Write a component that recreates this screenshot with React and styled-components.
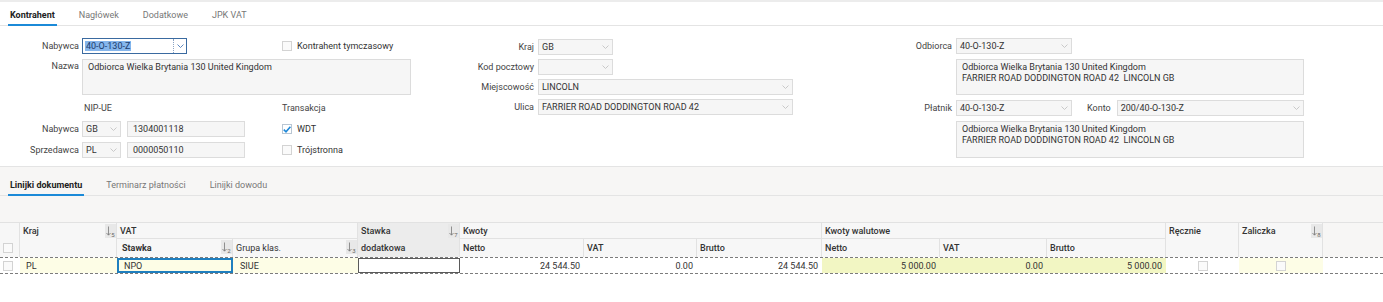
import styled, { createGlobalStyle } from "styled-components";

const GlobalStyle = createGlobalStyle`
  body {
    margin: 0;
    background: #fff;
    font-family: Roboto, "Liberation Sans", sans-serif;
    font-size: 9px;
    color: #333;
  }
  * { box-sizing: border-box; }
`;

const Page = styled.div`
  width: 1383px;
  border-top: 2px solid #ececec;
`;

const TabBar = styled.div`
  display: flex;
  align-items: flex-end;
  gap: 20px;
  height: ${(p) => p.$h}px;
  padding: 0 8px;
  border-bottom: 1px solid #e4e4e4;
`;

const Tab = styled.div`
  padding: 0 2px 3px;
  margin-bottom: -1px;
  line-height: 12px;
  font-size: 9px;
  color: ${(p) => (p.$active ? "#222" : "#777")};
  font-weight: ${(p) => (p.$active ? 700 : 400)};
  border-bottom: 2px solid ${(p) => (p.$active ? "#1b8ad8" : "transparent")};
`;

/* ---------- form ---------- */

const FormArea = styled.div`
  display: flex;
  align-items: flex-start;
  padding: 12px 0 8px;
`;

const Panel = styled.div`
  display: grid;
  grid-template-columns: ${(p) => p.$cols};
  grid-template-rows: ${(p) => p.$rows || "none"};
  grid-auto-rows: 16px;
  column-gap: ${(p) => p.$cgap || 4}px;
  row-gap: ${(p) => p.$rgap}px;
  width: ${(p) => p.$w}px;
  padding-top: ${(p) => p.$pt || 0}px;
`;

const Label = styled.div`
  grid-column: 1;
  text-align: right;
  color: #444;
  line-height: ${(p) => (p.$top ? "10px" : "16px")};
  align-self: ${(p) => (p.$top ? "start" : "stretch")};
  padding-top: ${(p) => (p.$top ? "2px" : "0")};
  white-space: nowrap;
`;

const Cell = styled.div`
  grid-column: ${(p) => p.$col || "auto"};
  display: flex;
  align-items: center;
  gap: ${(p) => p.$gap || 0}px;
  min-width: 0;
`;

const Caption = styled.div`
  color: #444;
  padding-left: ${(p) => p.$pl || 0}px;
  margin: ${(p) => p.$margin || "0"};
  line-height: 16px;
`;

const SelectBox = styled.div`
  flex: ${(p) => (p.$w ? "none" : "1")};
  width: ${(p) => (p.$w ? `${p.$w}px` : "auto")};
  height: 16px;
  display: flex;
  align-items: center;
  border: 1px solid ${(p) => (p.$focus ? "#3a6aa0" : "#dcdcdc")};
  background: ${(p) => (p.$focus ? "#fff" : "#f6f6f6")};
  color: #333;
`;

const SelectValue = styled.span`
  flex: 1;
  padding-left: ${(p) => (p.$focus ? 2 : 3)}px;
  white-space: nowrap;
  overflow: hidden;
`;

const Highlight = styled.span`
  background: #86b6ec;
  color: #1c3c6c;
  padding: 0 1px;
`;

const Arrow = styled.span`
  flex: none;
  width: ${(p) => (p.$focus ? 13 : 14)}px;
  height: 100%;
  display: flex;
  align-items: center;
  justify-content: center;
  border-left: ${(p) => (p.$focus ? "1px dotted #8aa3c4" : "none")};
`;

const TextInput = styled.div`
  flex: none;
  width: ${(p) => p.$w}px;
  height: 16px;
  line-height: 14px;
  padding-left: 5px;
  border: 1px solid #dcdcdc;
  background: #f6f6f6;
  color: #333;
`;

const TextArea = styled.div`
  grid-column: ${(p) => p.$col || "auto"};
  border: 1px solid #dcdcdc;
  background: #f6f6f6;
  padding: 2px 5px;
  line-height: 11px;
  color: #333;
`;

const Box = styled.span`
  flex: none;
  display: inline-flex;
  align-items: center;
  justify-content: center;
  width: 10px;
  height: 10px;
  border: 1px solid ${(p) => (p.$checked ? "#b9c6d3" : "#d3d3d3")};
  background: ${(p) => (p.$checked ? "#fff" : "#fafafa")};
`;

const CheckLabel = styled.span`
  color: #333;
  margin-left: 5px;
`;

const Chevron = ({ focus }) => (
  <svg width="7" height="4" viewBox="0 0 7 4">
    <polyline points="0.5,0.5 3.5,3.5 6.5,0.5" fill="none" stroke={focus ? "#4d7cb8" : "#c4c4c4"} strokeWidth="0.9" />
  </svg>
);

const Select = ({ w, value, focus }) => (
  <SelectBox $w={w} $focus={focus}>
    <SelectValue $focus={focus}>{focus ? <Highlight>{value}</Highlight> : value}</SelectValue>
    <Arrow $focus={focus}>
      <Chevron focus={focus} />
    </Arrow>
  </SelectBox>
);

const Check = ({ checked }) => (
  <Box $checked={checked}>
    {checked && (
      <svg width="8" height="7" viewBox="0 0 8 7">
        <polyline points="0.8,3.6 3,5.8 7.4,0.8" fill="none" stroke="#1e88d8" strokeWidth="1.6" />
      </svg>
    )}
  </Box>
);

/* ---------- lower part ---------- */

const Lower = styled.div`
  background: #f7f6f5;
  border-top: 1px solid #e4e4e4;
`;

const Spacer = styled.div`
  height: 26px;
`;

const COLS = "20px 97px 116px 125px 102px 124px 113px 125px 118px 107px 119px 73px 84px 1fr";

const HeadGrid = styled.div`
  display: grid;
  grid-template-columns: ${COLS};
  grid-template-rows: 16px 18px;
  border-top: 1px solid #e2e2e2;
`;

const HeadCell = styled.div`
  grid-column: ${(p) => p.$col};
  grid-row: ${(p) => p.$row};
  display: flex;
  justify-content: space-between;
  align-items: flex-start;
  padding-left: ${(p) => (p.$pl !== undefined ? p.$pl : 3)}px;
  background: ${(p) => p.$bg || "#f7f7f7"};
  border-right: ${(p) => (p.$none ? "none" : "1px solid #e2e2e2")};
  border-bottom: ${(p) => (p.$bottom ? "1px solid #e2e2e2" : "none")};
  line-height: ${(p) => p.$lh || 16}px;
  font-weight: ${(p) => p.$weight || 500};
  color: #333;
  white-space: nowrap;
`;

const CenterBox = styled.div`
  align-self: center;
  display: flex;
`;

const SortBox = styled.span`
  flex: none;
  display: flex;
  align-items: flex-start;
  justify-content: center;
  width: 11px;
  height: 14px;
  margin-top: 1px;
  padding-top: 2px;
  background: #e8e8e8;
  color: #666;
  font-size: 6px;
  font-weight: 400;
  line-height: 6px;
`;

const SortNum = styled.span`
  padding-top: 6px;
`;

const Sort = ({ n }) => (
  <SortBox>
    <svg width="5" height="10" viewBox="0 0 5 10">
      <path d="M2.5 0.5 V9 M0.5 7 L2.5 9.2 L4.5 7" fill="none" stroke="#777" strokeWidth="0.8" />
    </svg>
    <SortNum>{n}</SortNum>
  </SortBox>
);

const DataRow = styled.div`
  display: grid;
  grid-template-columns: ${COLS};
  height: 17px;
  border-top: 1px dashed #7c7c7c;
  border-bottom: 1px dashed #7c7c7c;
  background: #fff;
`;

const DataCell = styled.div`
  display: flex;
  align-items: center;
  justify-content: ${(p) => p.$justify || "flex-start"};
  padding: ${(p) => (p.$right ? "0 4px 0 0" : `0 0 0 ${p.$pl || 0}px`)};
  background: ${(p) => p.$bg || "#fff"};
  border: ${(p) => p.$border || "none"};
  color: #333;
  white-space: nowrap;
`;

const YELLOW = "#fdfde6";
const LIME = "#f2f6c3";

const ADDRESS = (
  <>
    Odbiorca Wielka Brytania 130 United Kingdom
    <br />
    FARRIER ROAD DODDINGTON ROAD 42&nbsp; LINCOLN GB
  </>
);

export default function App() {
  return (
    <Page>
      <GlobalStyle />
      <TabBar $h={24}>
        <Tab $active>Kontrahent</Tab>
        <Tab>Nagłówek</Tab>
        <Tab>Dodatkowe</Tab>
        <Tab>JPK VAT</Tab>
      </TabBar>

      <FormArea>
        <Panel $w={420} $cols="79px 197px 129px" $cgap={3} $rgap={5} $rows="16px 36px 16px 16px 16px">
          <Label>Nabywca</Label>
          <Cell $col="2">
            <Select w={105} value="40-O-130-Z" focus />
          </Cell>
          <Cell $col="3">
            <Check />
            <CheckLabel>Kontrahent tymczasowy</CheckLabel>
          </Cell>

          <Label $top>Nazwa</Label>
          <TextArea $col="2 / 4">Odbiorca Wielka Brytania 130 United Kingdom</TextArea>

          <Cell $col="2">
            <Caption $pl={2}>NIP-UE</Caption>
          </Cell>
          <Cell $col="3">
            <Caption>Transakcja</Caption>
          </Cell>

          <Label>Nabywca</Label>
          <Cell $col="2" $gap={6}>
            <Select w={39} value="GB" />
            <TextInput $w={118}>1304001118</TextInput>
          </Cell>
          <Cell $col="3">
            <Check checked />
            <CheckLabel>WDT</CheckLabel>
          </Cell>

          <Label>Sprzedawca</Label>
          <Cell $col="2" $gap={6}>
            <Select w={39} value="PL" />
            <TextInput $w={118}>0000050110</TextInput>
          </Cell>
          <Cell $col="3">
            <Check />
            <CheckLabel>Trójstronna</CheckLabel>
          </Cell>
        </Panel>

        <Panel $w={380} $cols="114px 255px" $rgap={4} $pt={1}>
          <Label>Kraj</Label>
          <Cell>
            <Select w={75} value="GB" />
          </Cell>
          <Label>Kod pocztowy</Label>
          <Cell>
            <Select w={75} value="" />
          </Cell>
          <Label>Miejscowość</Label>
          <Cell>
            <Select value="LINCOLN" />
          </Cell>
          <Label>Ulica</Label>
          <Cell>
            <Select value="FARRIER ROAD DODDINGTON ROAD 42" />
          </Cell>
        </Panel>

        <Panel $w={504} $cols="152px 348px" $rgap={5} $rows="16px 36px 16px 37px">
          <Label>Odbiorca</Label>
          <Cell>
            <Select w={116} value="40-O-130-Z" />
          </Cell>
          <TextArea $col="2">{ADDRESS}</TextArea>
          <Label>Płatnik</Label>
          <Cell>
            <Select w={116} value="40-O-130-Z" />
            <Caption $margin="0 6px 0 15px">Konto</Caption>
            <Select value="200/40-O-130-Z" />
          </Cell>
          <TextArea $col="2">{ADDRESS}</TextArea>
        </Panel>
      </FormArea>

      <Lower>
        <TabBar $h={29}>
          <Tab $active>Linijki dokumentu</Tab>
          <Tab>Terminarz płatności</Tab>
          <Tab>Linijki dowodu</Tab>
        </TabBar>
        <Spacer />
        <HeadGrid>
          <HeadCell $col="1" $row="1" />
          <HeadCell $col="1" $row="2" $pl={3}>
            <CenterBox>
              <Check />
            </CenterBox>
          </HeadCell>
          <HeadCell $col="2" $row="1 / 3">
            Kraj
            <Sort n="5" />
          </HeadCell>
          <HeadCell $col="3 / 5" $row="1" $bottom>
            VAT
          </HeadCell>
          <HeadCell $col="3" $row="2" $lh={18} $weight={700} $pl={5}>
            Stawka
            <Sort n="2" />
          </HeadCell>
          <HeadCell $col="4" $row="2" $lh={18} $weight={400}>
            Grupa klas.
            <Sort n="3" />
          </HeadCell>
          <HeadCell $col="5" $row="1 / 3" $bg="#ececec" $lh={17}>
            <span>
              Stawka
              <br />
              dodatkowa
            </span>
            <Sort n="7" />
          </HeadCell>
          <HeadCell $col="6 / 9" $row="1" $bottom>
            Kwoty
          </HeadCell>
          <HeadCell $col="6" $row="2" $lh={18}>Netto</HeadCell>
          <HeadCell $col="7" $row="2" $lh={18}>VAT</HeadCell>
          <HeadCell $col="8" $row="2" $lh={18}>Brutto</HeadCell>
          <HeadCell $col="9 / 12" $row="1" $bottom>
            Kwoty walutowe
          </HeadCell>
          <HeadCell $col="9" $row="2" $lh={18}>Netto</HeadCell>
          <HeadCell $col="10" $row="2" $lh={18}>VAT</HeadCell>
          <HeadCell $col="11" $row="2" $lh={18}>Brutto</HeadCell>
          <HeadCell $col="12" $row="1 / 3">Ręcznie</HeadCell>
          <HeadCell $col="13" $row="1 / 3">
            Zaliczka
            <Sort n="8" />
          </HeadCell>
          <HeadCell $col="14" $row="1 / 3" $bg="transparent" $none />
        </HeadGrid>
      </Lower>

      <DataRow>
        <DataCell $pl={3}>
          <Check />
        </DataCell>
        <DataCell $bg={YELLOW} $pl={6}>PL</DataCell>
        <DataCell $bg={YELLOW} $pl={5} $border="2px solid #1f7fbf">NPO</DataCell>
        <DataCell $bg={YELLOW} $pl={7}>SIUE</DataCell>
        <DataCell $border="1px solid #5a5a5a" />
        <DataCell $justify="flex-end" $right>24 544.50</DataCell>
        <DataCell $justify="flex-end" $right>0.00</DataCell>
        <DataCell $justify="flex-end" $right>24 544.50</DataCell>
        <DataCell $bg={LIME} $justify="flex-end" $right>5 000.00</DataCell>
        <DataCell $bg={LIME} $justify="flex-end" $right>0.00</DataCell>
        <DataCell $bg={LIME} $justify="flex-end" $right>5 000.00</DataCell>
        <DataCell $justify="center">
          <Check />
        </DataCell>
        <DataCell $bg={YELLOW} $justify="center">
          <Check />
        </DataCell>
        <DataCell />
      </DataRow>
    </Page>
  );
}
